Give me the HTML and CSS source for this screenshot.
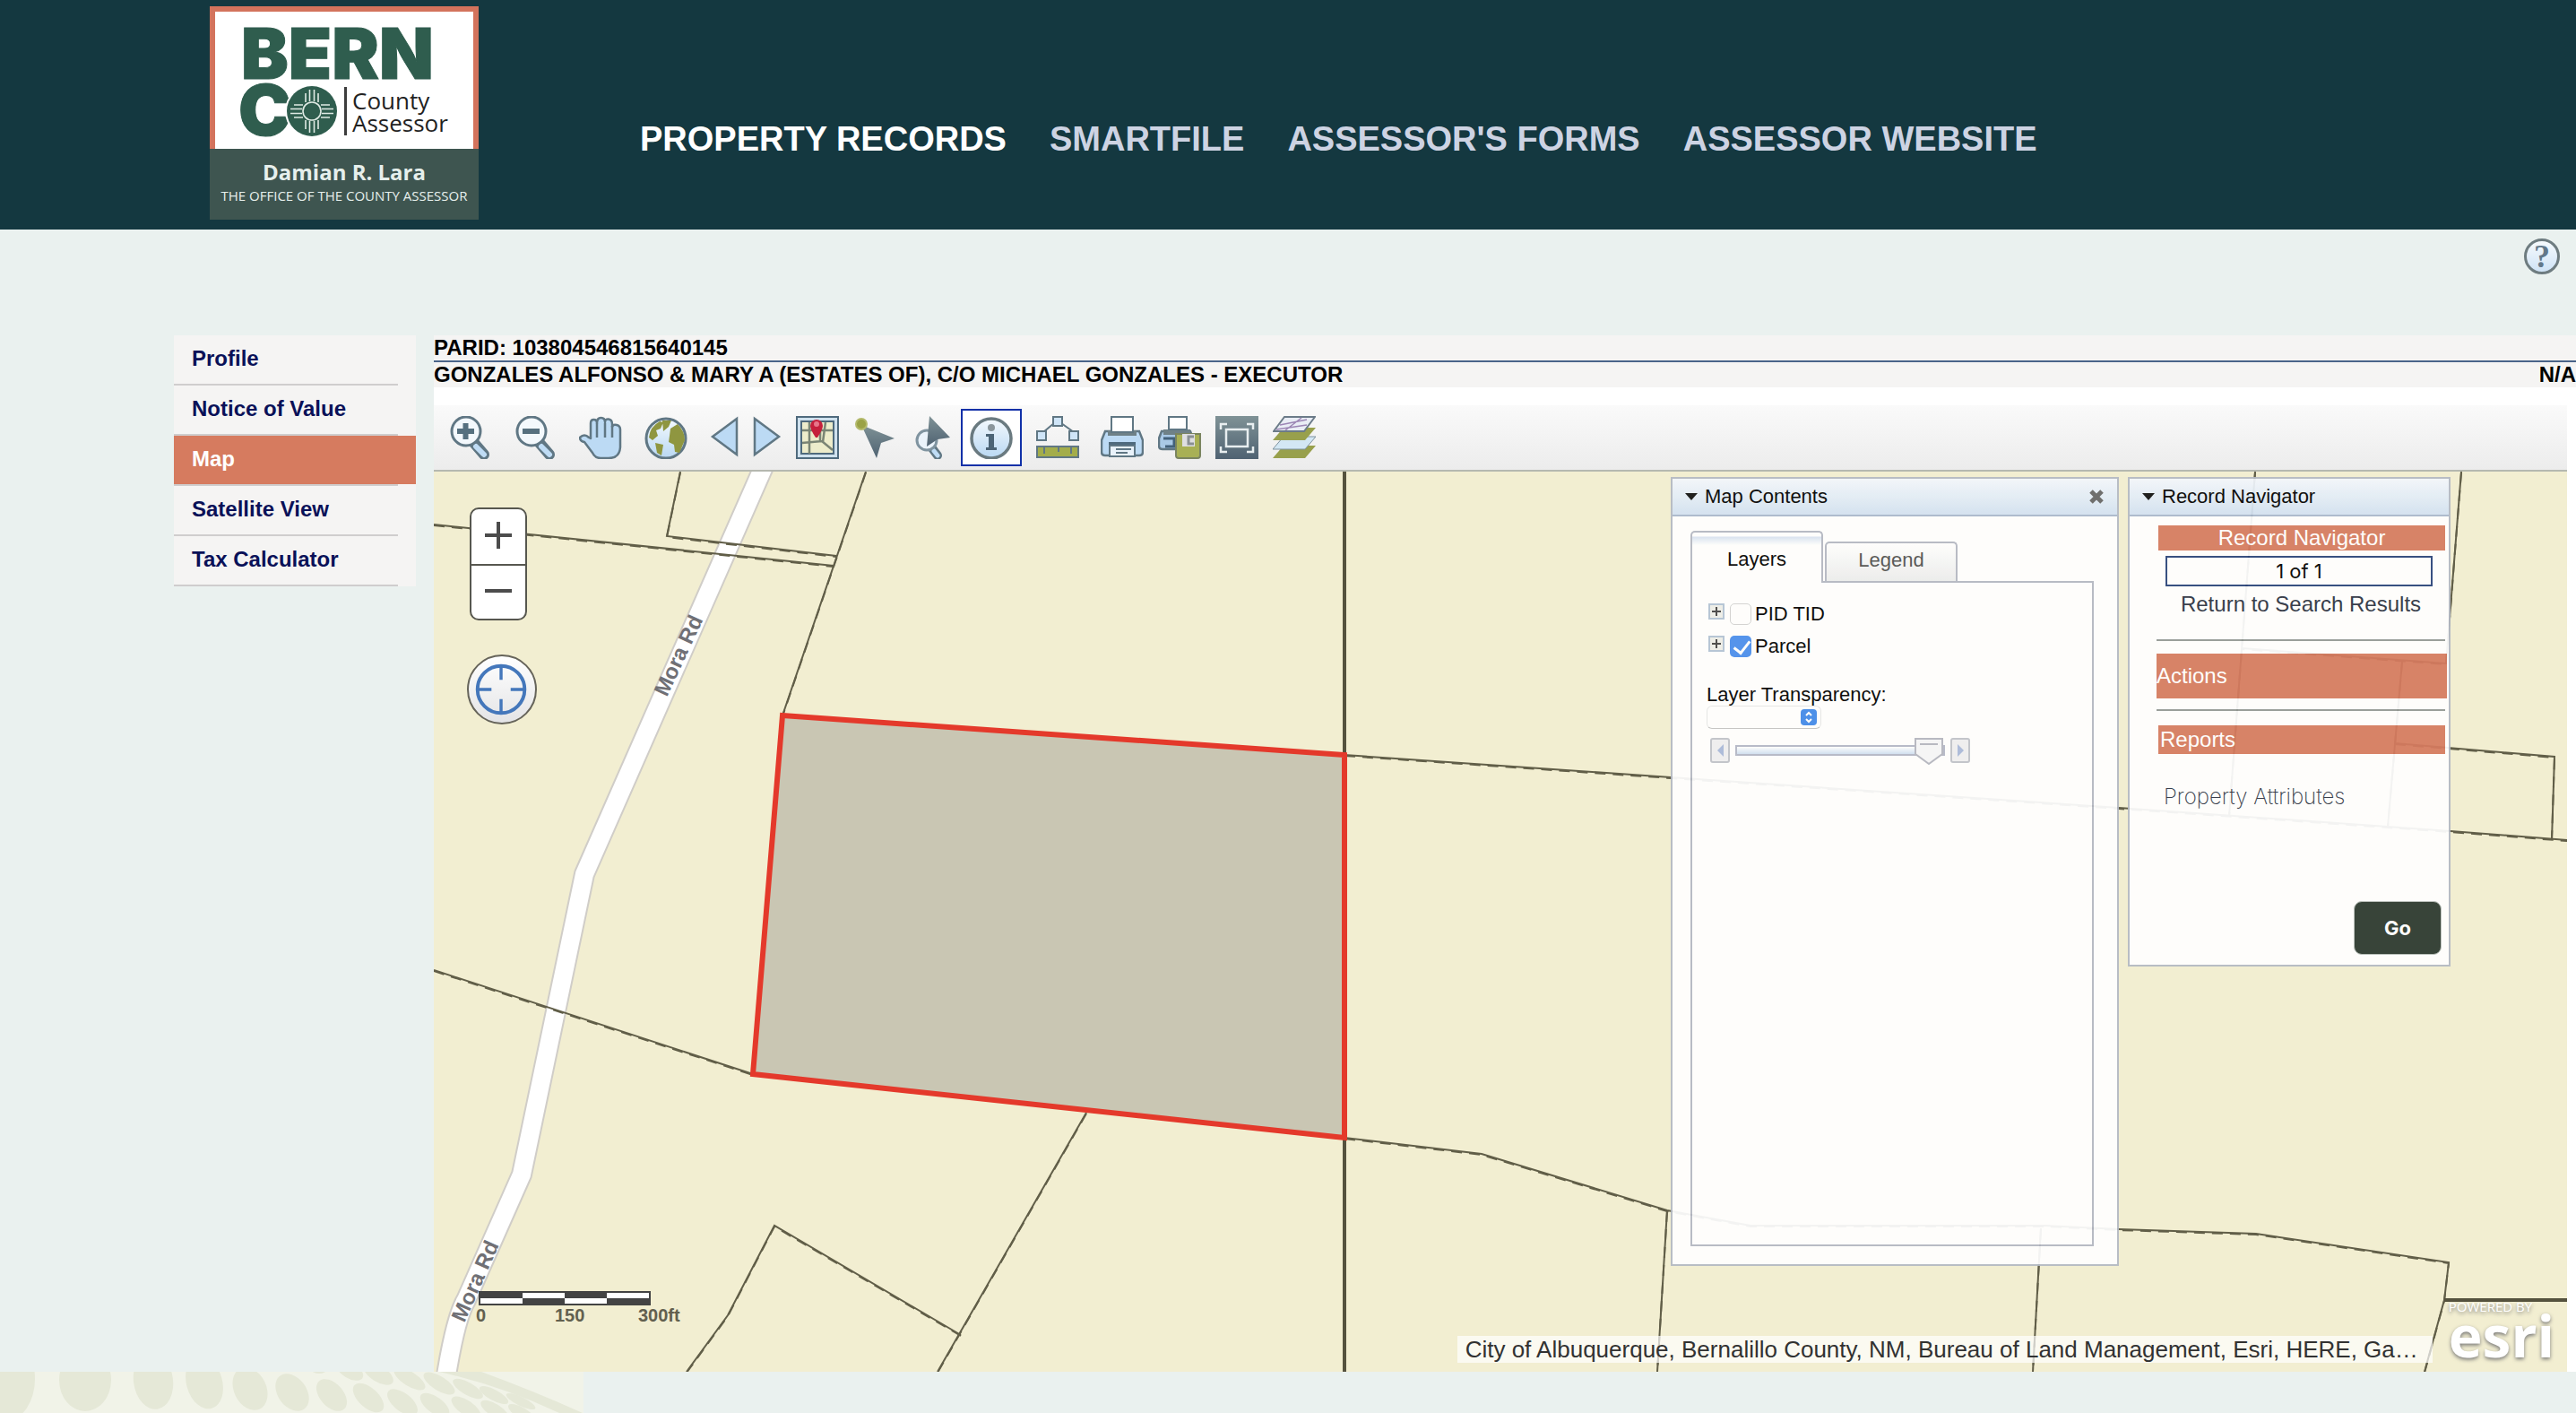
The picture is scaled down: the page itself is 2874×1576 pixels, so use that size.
FILE: index.html
```html
<!DOCTYPE html>
<html lang="en">
<head>
  <meta charset="UTF-8">
  <meta name="viewport" content="width=device-width, initial-scale=1.0">
  <title>Bernalillo County Assessor - Map</title>
  <link rel="stylesheet" href="styles.css">
</head>
<body>
  <header class="header">
    <a class="logo" href="#">
      <svg class="logo-mark" viewBox="0 0 288 153" role="img" aria-label="Bernco County Assessor">
        <text class="logo-bern" x="29" y="75">BERN</text>
        <text class="logo-bern" x="26" y="138">C</text>
        <circle cx="108" cy="111" r="30" fill="#fff"/>
        <circle cx="108" cy="111" r="28" fill="#2f5d4e"/>
        <g stroke="#dfeae4" stroke-width="1.6" fill="none">
          <circle cx="108" cy="111" r="10"/>
          <path d="M101 101v-10M105.500 100v-13M110.500 100v-13M115 101v-10M101 121v10M105.500 122v13M110.500 122v13M115 121v10M98 104h-10M97 108.500h-13M97 113.500h-13M98 118h-10M118 104h10M119 108.500h13M119 113.500h13M118 118h10"/>
        </g>
        <rect x="144" y="84" width="3" height="54" fill="#3d3d3d"/>
        <text class="logo-sub" x="153" y="109">County</text>
        <text class="logo-sub" x="153" y="134">Assessor</text>
      </svg>
      <span class="logo-plate">
        <strong>Damian R. Lara</strong>
        <small>THE OFFICE OF THE COUNTY ASSESSOR</small>
      </span>
    </a>
    <nav class="topnav">
      <a class="current" href="#">PROPERTY RECORDS</a>
      <a href="#">SMARTFILE</a>
      <a href="#">ASSESSOR'S FORMS</a>
      <a href="#">ASSESSOR WEBSITE</a>
    </nav>
  </header>

  <div class="helpbar">
    <button class="help" type="button" aria-label="Help">?</button>
  </div>

  <div class="page">
    <nav class="sidebar">
      <ul>
        <li><a href="#">Profile</a></li>
        <li><a href="#">Notice of Value</a></li>
        <li><a class="active" href="#">Map</a></li>
        <li><a href="#">Satellite View</a></li>
        <li><a href="#">Tax Calculator</a></li>
      </ul>
    </nav>

    <main class="main">
      <div class="parcel-head">
        <div class="parid">PARID: 103804546815640145</div>
        <div class="owner">
          <span>GONZALES ALFONSO &amp; MARY A (ESTATES OF), C/O MICHAEL GONZALES - EXECUTOR</span>
          <span>N/A</span>
        </div>
      </div>

      <svg class="defs" width="0" height="0" aria-hidden="true">
        <defs>
          <linearGradient id="sky" x1="0" y1="0" x2="0" y2="1"><stop offset="0" stop-color="#f4f9fd"/><stop offset="1" stop-color="#b9d8f3"/></linearGradient>
          <linearGradient id="steel" x1="0" y1="0" x2="0" y2="1"><stop offset="0" stop-color="#7f9296"/><stop offset="1" stop-color="#4f6272"/></linearGradient>
        </defs>
      </svg>

      <div class="toolbar">
        <div class="tools tools-nav">
          <button type="button" aria-label="Zoom in"><svg viewBox="0 0 48 48"><path d="M28 29l12 14" stroke="#607784" stroke-width="12" stroke-linecap="round"/><path d="M31 34l9 9" stroke="#bfdcf5" stroke-width="6" stroke-linecap="round"/><circle cx="20" cy="17" r="16" fill="#f3f8fc" stroke="#607784" stroke-width="3"/><path d="M10 17h19M19.500 8v18" stroke="#56707f" stroke-width="6"/></svg></button>
          <button type="button" aria-label="Zoom out"><svg viewBox="0 0 48 48"><path d="M28 29l12 14" stroke="#607784" stroke-width="12" stroke-linecap="round"/><path d="M31 34l9 9" stroke="#bfdcf5" stroke-width="6" stroke-linecap="round"/><circle cx="20" cy="17" r="16" fill="#f3f8fc" stroke="#607784" stroke-width="3"/><path d="M10 17h19" stroke="#56707f" stroke-width="6"/></svg></button>
          <button type="button" aria-label="Pan"><svg viewBox="0 0 48 48"><path d="M13 25V8q0-4 3.500-4T20 8q0-6 4.500-6T29 7q0-4 4-3.500T37 9v3q1-3 5-2t4 5v20q-1 12-13 12H24q-6 0-9-6L6 29q-5-1-5-5 5-5 10 0z" fill="#bcdaf4" stroke="#607784" stroke-width="2.500" stroke-linejoin="round"/><path d="M20 8v16M29 8v16M37 11v13" stroke="#607784" stroke-width="2.500"/></svg></button>
          <button type="button" aria-label="Full extent"><svg viewBox="0 0 48 48"><circle cx="24" cy="25" r="22" fill="url(#sky)" stroke="#607784" stroke-width="3"/><path d="M5 24q1-12 12-18l4 1-3 7-5 2 2 6-6 5zM20 5h10l-3 7-6 5zM29 14l8-5q8 8 8 18l-6 14-5-1-1-8-6-3 1-7zM12 30l9 2-2 12-5-3z" fill="#8f9640"/></svg></button>
        </div>
        <div class="tools">
          <button class="narrow" type="button" aria-label="Previous extent"><svg viewBox="0 0 32 48"><path d="M30 3v40L3 23z" fill="#bcdaf4" stroke="#607784" stroke-width="2.500"/></svg></button>
          <button class="narrow" type="button" aria-label="Next extent"><svg viewBox="0 0 32 48"><path d="M2 3v40l27-20z" fill="#bcdaf4" stroke="#607784" stroke-width="2.500"/></svg></button>
          <button type="button" aria-label="Overview map"><svg viewBox="0 0 48 48"><path d="M1 1h46v46H1z" fill="#cfe1ee" stroke="#4f6a7d" stroke-width="2"/><path d="M6 6h36v36H6z" fill="#edeccb" stroke="#4f6a7d" stroke-width="2"/><path d="M7 16h34M7 30l22-2 12 10M15 7v35M27 16v12M33 7l-3 22" fill="none" stroke="#7a8474" stroke-width="2.500"/><path d="M22 24q-6-9-6-13a7 7 0 0 1 14 0q0 4-6 13z" fill="#c5203c"/><circle cx="23" cy="9" r="3" fill="#e7768a"/></svg></button>
          <button type="button" aria-label="Select features"><svg viewBox="0 0 48 48"><path d="M9 10l37 15-15 5-5 17z" fill="url(#steel)"/><circle cx="9" cy="9" r="6" fill="#9aa246" stroke="#b3b96b" stroke-width="2"/></svg></button>
          <button type="button" aria-label="Zoom to selection"><svg viewBox="0 0 48 48"><path d="M24 36l6 8" stroke="#607784" stroke-width="10" stroke-linecap="round"/><path d="M26 39l4 5" stroke="#bfdcf5" stroke-width="5" stroke-linecap="round"/><circle cx="18" cy="27" r="11" fill="#eaf3fb" stroke="#8094a0" stroke-width="3"/><path d="M21 0l23 24-14 2-12 8z" fill="url(#steel)"/></svg></button>
          <button class="selected" type="button" aria-label="Identify"><svg viewBox="0 0 48 48"><circle cx="24" cy="25" r="22" fill="url(#sky)" stroke="#6a7a80" stroke-width="3.500"/><circle cx="24" cy="13" r="4" fill="#8b969c"/><path d="M18 20h9v15h3v3H18v-3h3V23h-3z" fill="#4c6476"/></svg></button>
          <button type="button" aria-label="Measure"><svg viewBox="0 0 48 48"><path d="M8 18l12-10h8l14 10" fill="none" stroke="#607784" stroke-width="2"/><path d="M19 1h10v10H19zM1 17h10v10H1zM37 17h10v10H37z" fill="#cfe5f8" stroke="#607784" stroke-width="2"/><path d="M1 34h46v12H1z" fill="#a3ad4a" stroke="#607784" stroke-width="2"/><path d="M9 34v8M25 34v6M39 34v8" stroke="#607784" stroke-width="2"/></svg></button>
          <button class="after-break" type="button" aria-label="Print"><svg viewBox="0 0 48 48"><path d="M5 17h38l4 10v13q0 4-4 4H5q-4 0-4-4V27z" fill="#bcdaf4" stroke="#607784" stroke-width="2.500"/><path d="M8 16h32v6H8z" fill="#6f8187"/><path d="M12 1h24v17H12z" fill="#fff" stroke="#607784" stroke-width="2"/><path d="M9 29h30v3H9z" fill="#4f6a7d"/><path d="M10 33h28v12H10z" fill="#e9f2fa" stroke="#607784" stroke-width="2"/><path d="M17 37h17M17 41h13" stroke="#607784" stroke-width="2"/></svg></button>
          <button type="button" aria-label="Print to file"><svg viewBox="0 0 48 48"><path d="M4 17h32l3 8v8q0 4-4 4H5q-4 0-4-4v-8z" fill="#a9c9e6" stroke="#607784" stroke-width="2.500"/><path d="M6 15h30v6H6z" fill="#6f8187"/><path d="M12 1h20v14H12z" fill="#fff" stroke="#607784" stroke-width="2"/><path d="M6 25h12v9H8" fill="none" stroke="#43617a" stroke-width="3"/><path d="M20 20h27v24q0 3-3 3H23q-3 0-3-3z" fill="#a8b055" stroke="#7a8460" stroke-width="2"/><path d="M27 20h14v14H27z" fill="#dfdfe2"/><path d="M40 23h-6v8h6" fill="none" stroke="#8a9094" stroke-width="3"/></svg></button>
          <button type="button" aria-label="Zoom to extent"><svg viewBox="0 0 48 48"><path d="M0 0h48v48H0z" fill="url(#steel)"/><path d="M12 15h24v19H12zM6 15V9h7M35 9h7v6M6 34v6h7M35 40h7v-6" fill="none" stroke="#e8eef0" stroke-width="2.500"/></svg></button>
          <button type="button" aria-label="Map layers"><svg viewBox="0 0 48 48"><path d="M12 33h36L36 47H0z" fill="#98a04c"/><path d="M12 23h36L36 37H0z" fill="#d3e7f4" stroke="#7f929e"/><path d="M12 13h36L36 27H0z" fill="#98a04c"/><path d="M13 1h34L35 17H1z" fill="#e9edf5" stroke="#6b7b88" stroke-width="2"/><path d="M8 10l30-6M14 16l18-14M4 15l34-5" stroke="#9c86b5" stroke-width="1.500"/></svg></button>
        </div>
      </div>

      <div class="map">
        <svg class="map-canvas" viewBox="484 526 2380 1004" preserveAspectRatio="xMinYMin slice" role="img" aria-label="Parcel map">
          <path class="road-edge" d="M854 516L652 975L582 1310L520 1450Q508 1470 497 1540"/>
          <path class="road" d="M854 516L652 975L582 1310L520 1450Q508 1470 497 1540"/>
          <text class="road-name" transform="translate(744 778) rotate(-65)">Mora Rd</text>
          <text class="road-name" transform="translate(518 1476) rotate(-66)">Mora Rd</text>
          <g id="lines" class="lines">
            <path d="M484 585L930 631"/>
            <path d="M759 526L744 598L933 620"/>
            <path d="M966 526L873 798"/>
            <path d="M484 1082L840 1198"/>
            <path d="M1212 1241L1046 1530"/>
            <path d="M766 1530L812 1467L864 1367L1072 1489"/>
            <path d="M1500 842L1864 867L2364 901L2734 927L2864 937"/>
            <path d="M1500 1269L1653 1287L1860 1350L1953 1367H2283L2364 1371L2517 1376L2732 1408L2727 1450L2705 1530"/>
            <path d="M1860 1350L1849 1530"/>
            <path d="M2277 1370L2268 1530"/>
            <path d="M2516 526L2487 910"/>
            <path d="M2746 526L2729 740L2501 723"/>
            <path d="M2680 738L2664 922"/>
            <path d="M2672 829L2850 844L2847 936"/>
          </g>
          <use href="#lines" class="dashes"/>
          <path class="section" d="M1500 526V1530M2727 1450H2864"/>
          <path class="subject" d="M873 798L1500 842V1269L840 1198Z"/>
        </svg>

        <div class="map-controls">
          <div class="zoom">
            <button type="button" aria-label="Zoom in"><svg viewBox="0 0 60 62"><path d="M15 29h30M30 14v30" stroke="#4c4c4c" stroke-width="4"/></svg></button>
            <button type="button" aria-label="Zoom out"><svg viewBox="0 0 60 62"><path d="M15 28h30" stroke="#4c4c4c" stroke-width="4"/></svg></button>
          </div>
          <button class="locate" type="button" aria-label="Find my location"><svg viewBox="0 0 76 76"><path d="M37 11v16M37 49v16M10 38h16M48 38h16" stroke="#4477bb" stroke-width="3.500"/><circle cx="37" cy="38" r="27" fill="none" stroke="#4477bb" stroke-width="4"/></svg></button>
        </div>

        <div class="scalebar">
          <svg viewBox="0 0 192 16"><path d="M0 0h192v16H0z" fill="#434343"/><path d="M2 8h47v6H2zM49 2h47v6H49zM96 8h47v6H96zM143 2h47v6h-47z" fill="#fff"/></svg>
          <div class="scale-labels"><span>0</span><span>150</span><span>300ft</span></div>
        </div>

        <div class="credits">
          <span class="attribution">City of Albuquerque, Bernalillo County, NM, Bureau of Land Management, Esri, HERE, Ga…</span>
          <a class="esri" href="#"><small>POWERED BY</small><b>esri</b></a>
        </div>

        <div class="panels">
          <section class="panel contents">
            <h2 class="panel-title"><i class="caret"></i>Map Contents<button class="close" type="button" aria-label="Close"><svg viewBox="0 0 18 18"><path d="M3 3l12 12M15 3L3 15" stroke="#666" stroke-width="5"/></svg></button></h2>
            <div class="contents-body">
              <div class="tabs">
                <button class="tab on" type="button">Layers</button>
                <button class="tab" type="button">Legend</button>
              </div>
              <div class="pane">
                <div class="layer">
                  <button class="expand" type="button" aria-label="Expand PID TID"></button>
                  <input type="checkbox" id="pid">
                  <label for="pid">PID TID</label>
                </div>
                <div class="layer">
                  <button class="expand" type="button" aria-label="Expand Parcel"></button>
                  <input type="checkbox" id="parcel" checked>
                  <label for="parcel">Parcel</label>
                </div>
                <label class="transparency" for="layerPick">Layer Transparency:</label>
                <div class="pick">
                  <select id="layerPick"><option></option></select>
                  <svg viewBox="0 0 18 18"><rect width="18" height="18" rx="4" fill="#4189ea"/><path d="M6 7l3-3 3 3M6 11l3 3 3-3" fill="none" stroke="#fff" stroke-width="2"/></svg>
                </div>
                <div class="slider">
                  <button type="button" aria-label="Decrease"><svg viewBox="0 0 18 24"><path d="M13 5v14l-7-7z" fill="#a9b9da"/></svg></button>
                  <input type="range" min="0" max="100" value="100" aria-label="Transparency">
                  <button type="button" aria-label="Increase"><svg viewBox="0 0 18 24"><path d="M6 5v14l7-7z" fill="#a9b9da"/></svg></button>
                </div>
              </div>
            </div>
          </section>

          <section class="panel navigator">
            <h2 class="panel-title"><i class="caret"></i>Record Navigator</h2>
            <div class="navigator-body">
              <h3 class="bar centered">Record Navigator</h3>
              <input class="position" type="text" value="1 of 1" aria-label="Record position">
              <a class="return" href="#">Return to Search Results</a>
              <hr>
              <h3 class="bar actions">Actions</h3>
              <hr>
              <h3 class="bar reports">Reports</h3>
              <a class="report" href="#">Property Attributes</a>
              <button class="go" type="button">Go</button>
            </div>
          </section>
        </div>
      </div>
    </main>
  </div>

  <footer class="footer">
    <svg viewBox="0 0 651 46" aria-hidden="true">
      <path d="M0 0h651v46H0z" fill="#f1f3e8"/>
      <g fill="#e5e8d7">
        <ellipse cx="8" cy="8" rx="31" ry="46"/>
        <ellipse cx="95" cy="9" rx="29" ry="35"/>
        <ellipse cx="171" cy="10" rx="22" ry="32" transform="rotate(-8 171 10)"/>
        <ellipse cx="228" cy="12" rx="20" ry="30" transform="rotate(-16 228 12)"/>
        <ellipse cx="279" cy="19" rx="18" ry="25" transform="rotate(-26 279 19)"/>
        <ellipse cx="326" cy="23" rx="16" ry="23" transform="rotate(-36 326 23)"/>
        <ellipse cx="370" cy="26" rx="13" ry="21" transform="rotate(-42 370 26)"/>
        <ellipse cx="411" cy="29" rx="11" ry="21" transform="rotate(-48 411 29)"/>
        <ellipse cx="449" cy="34" rx="10" ry="20" transform="rotate(-52 449 34)"/>
        <ellipse cx="485" cy="37" rx="9" ry="19" transform="rotate(-54 485 37)"/>
        <ellipse cx="520" cy="40" rx="8" ry="19" transform="rotate(-56 520 40)"/>
        <ellipse cx="552" cy="43" rx="7" ry="18" transform="rotate(-58 552 43)"/>
        <ellipse cx="582" cy="46" rx="6" ry="17" transform="rotate(-60 582 46)"/>
        <ellipse cx="356" cy="-2" rx="8" ry="4"/>
        <ellipse cx="390" cy="-2" rx="9" ry="17" transform="rotate(-58 390 -2)"/>
        <ellipse cx="422" cy="2" rx="9" ry="19" transform="rotate(-58 422 2)"/>
        <ellipse cx="457" cy="8" rx="8" ry="20" transform="rotate(-58 457 8)"/>
        <ellipse cx="490" cy="13" rx="8" ry="20" transform="rotate(-58 490 13)"/>
        <ellipse cx="522" cy="19" rx="7" ry="19" transform="rotate(-60 522 19)"/>
        <ellipse cx="551" cy="26" rx="6" ry="18" transform="rotate(-62 551 26)"/>
        <ellipse cx="581" cy="33" rx="5" ry="18" transform="rotate(-64 581 33)"/>
        <path d="M490 0h47q60 22 113 46h-26Q560 16 490 0z"/>
      </g>
    </svg>
  </footer>
</body>
</html>
```
FILE: styles.css
```css
* {
  box-sizing: border-box;
}
body {
  margin: 0;
  min-height: 100vh;
  display: flex;
  flex-direction: column;
  background-color: #eaf1ef;
  font-family: "Liberation Sans", Arial, sans-serif;
  font-size: 24px;
  color: #000;
}
a {
  color: inherit;
  text-decoration: none;
}
button {
  padding: 0;
  border: none;
  background: none;
  font: inherit;
  cursor: pointer;
}
svg {
  display: block;
}
h2, h3 {
  margin: 0;
  font-weight: normal;
}
.defs {
  position: absolute;
}

/* header */
.header {
  display: flex;
  align-items: flex-start;
  height: 256px;
  padding: 7px 0 0 234px;
  background-color: #143840;
}
.logo {
  width: 300px;
  height: 238px;
  display: flex;
  flex-direction: column;
  background-color: #3e5550;
}
.logo-mark {
  height: 159px;
  border: 6px solid #d3735c;
  border-bottom: none;
  background-color: #fff;
}
.logo-bern {
  font-family: Inter, sans-serif;
  font-weight: 900;
  font-size: 79px;
  fill: #2f5d4e;
  stroke: #2f5d4e;
  stroke-width: 1px;
}
.logo-sub {
  font-family: "Open Sans", sans-serif;
  font-size: 26px;
  font-weight: 500;
  fill: #222;
}
.logo-plate {
  padding-top: 10px;
  display: flex;
  flex-direction: column;
  align-items: center;
  font-family: "Open Sans", sans-serif;
  color: #e6efec;
}
.logo-plate strong {
  font-size: 24px;
  line-height: 32px;
}
.logo-plate small {
  font-size: 15px;
  line-height: 20px;
  white-space: nowrap;
}
.topnav {
  display: flex;
  gap: 48px;
  margin: 124px 0 0 180px;
  font-size: 38px;
  line-height: 48px;
  font-weight: bold;
  color: #cdd3e3;
}
.topnav .current {
  color: #fff;
}

.helpbar {
  display: flex;
  justify-content: flex-end;
  height: 118px;
  padding: 10px 18px 0 0;
}
.help {
  width: 40px;
  height: 40px;
  border: 3px solid #6e7c80;
  border-radius: 50%;
  background: linear-gradient(#f6fafd, #cfe3f6);
  font-family: "Liberation Serif", serif;
  font-weight: bold;
  font-size: 36px;
  line-height: 34px;
  color: #62788a;
}

/* page body */
.page {
  flex: 1;
  display: flex;
  gap: 20px;
  padding-left: 194px;
}
.sidebar {
  flex: 0 0 270px;
}
.sidebar ul {
  margin: 0;
  padding: 0;
  list-style: none;
  background-color: #f5f4f3;
}
.sidebar li::after {
  content: "";
  display: block;
  width: 250px;
  height: 2px;
  background-color: #cfcdcd;
}
.sidebar a {
  display: block;
  padding: 0 20px 2px;
  line-height: 52px;
  font-weight: bold;
  color: #0a1158;
}
.sidebar .active {
  background-color: #d67b5f;
  color: #fff;
}
.main {
  flex: 1;
  min-width: 0;
  display: flex;
  flex-direction: column;
  background-color: #fff;
}
.parcel-head {
  margin-bottom: 20px;
  background-color: #f5f4f3;
  font-weight: bold;
  line-height: 28px;
}
.parid {
  border-bottom: 2px solid #4a6489;
}
.owner {
  display: flex;
  justify-content: space-between;
}

/* toolbar */
.toolbar {
  display: flex;
  align-items: center;
  gap: 25px;
  height: 74px;
  margin-right: 10px;
  padding-left: 16px;
  background: linear-gradient(#fafafa, #ececec);
  border-bottom: 2px solid #b5b8b0;
}
.tools {
  display: flex;
  align-items: center;
  gap: 16px;
}
.tools-nav {
  gap: 25px;
}
.tools button {
  width: 48px;
  height: 48px;
}
.tools .narrow {
  width: 32px;
}
.tools .selected {
  width: 68px;
  height: 64px;
  margin-left: -8px;
  padding: 6px 8px;
  border: 2px solid #1030a8;
  background-color: #fff;
}
.tools .after-break {
  margin-left: 8px;
}

/* map */
.map {
  flex: 1;
  position: relative;
  min-height: 900px;
  margin-right: 10px;
  overflow: hidden;
  background-color: #f2eed1;
}
.map-canvas {
  position: absolute;
  width: 100%;
  height: 100%;
  fill: none;
}
.road-edge {
  stroke: #d0cdc8;
  stroke-width: 24;
}
.road {
  stroke: #fff;
  stroke-width: 20;
}
.road-name {
  fill: #707075;
  font-weight: bold;
  font-size: 24px;
}
.lines {
  stroke: #615e48;
  stroke-width: 2;
}
.dashes {
  stroke: #55523e;
  stroke-width: 3;
  stroke-dasharray: 12 8;
  transform: translateY(1px);
}
.section {
  stroke: #55523e;
  stroke-width: 4;
}
.subject {
  fill: #c9c6b3;
  stroke: #e4392b;
  stroke-width: 6;
}
.map-controls {
  position: absolute;
  top: 40px;
  left: 37px;
  width: 78px;
}
.zoom {
  width: 64px;
  margin-left: 3px;
  overflow: hidden;
  border: 2px solid #57574f;
  border-radius: 10px;
  background-color: #fff;
}
.zoom button {
  display: block;
  width: 60px;
  height: 61px;
}
.zoom button + button {
  border-top: 2px solid #57574f;
}
.locate {
  width: 78px;
  height: 78px;
  margin-top: 38px;
  border: 2px solid #66645a;
  border-radius: 50%;
  background: linear-gradient(#fff, #e4e4e6);
}
.scalebar {
  position: absolute;
  left: 50px;
  bottom: 52px;
  width: 192px;
}
.scale-labels {
  display: grid;
  grid-template-columns: 88px 93px auto;
  margin-left: -3px;
  font-size: 20px;
  line-height: 22px;
  font-weight: bold;
  color: #62604f;
}
.credits {
  position: absolute;
  right: 14px;
  bottom: 10px;
  display: flex;
  align-items: flex-end;
  gap: 18px;
}
.attribution {
  padding: 0 16px 0 9px;
  line-height: 30px;
  font-size: 26px;
  color: #323232;
  background-color: rgba(255, 255, 255, 0.7);
}
.esri {
  display: flex;
  flex-direction: column;
  padding-bottom: 5px;
  font-family: "Open Sans", sans-serif;
  color: #fff;
  text-shadow: 0 2px 4px #777;
}
.esri small {
  font-size: 15px;
  line-height: 15px;
}
.esri b {
  font-size: 64px;
  line-height: 50px;
}

/* floating panels */
.panels {
  position: absolute;
  top: 6px;
  right: 130px;
  bottom: 118px;
  display: flex;
  align-items: flex-start;
  gap: 10px;
}
.panel {
  border: 2px solid #b4bac4;
  background-color: #fff;
  opacity: 0.93;
  font-size: 22px;
}
.panel-title {
  display: flex;
  align-items: center;
  height: 42px;
  padding: 0 14px;
  background: linear-gradient(#f3f7fc, #d3e2f2);
  border-bottom: 2px solid #a9b8cd;
  font-size: 22px;
  line-height: 30px;
}
.caret {
  margin-right: 8px;
  border: 7px solid transparent;
  border-top: 8px solid #111;
  border-bottom: none;
}
.close {
  width: 18px;
  margin-left: auto;
}
.contents {
  width: 500px;
  height: 100%;
  display: flex;
  flex-direction: column;
}
.contents-body {
  flex: 1;
  display: flex;
  flex-direction: column;
  padding: 16px 26px 20px 20px;
}
.tabs {
  display: flex;
  align-items: flex-end;
  gap: 2px;
}
.tab {
  width: 148px;
  height: 44px;
  border: 2px solid #b4b8c4;
  border-bottom: none;
  border-radius: 5px 5px 0 0;
  background: linear-gradient(#fff, #ecedee);
  line-height: 32px;
  padding-bottom: 4px;
  color: #505050;
}
.tab.on {
  position: relative;
  height: 58px;
  margin-bottom: -2px;
  padding-top: 8px;
  background: linear-gradient(#fff 4px, #d9e3f2 5px, #fff 14px);
  color: #000;
}
.pane {
  flex: 1;
  padding: 23px 16px;
  border: 2px solid #b4b8c4;
}
.layer {
  display: flex;
  align-items: center;
  height: 24px;
  margin-bottom: 12px;
  padding-left: 2px;
}
.expand {
  width: 18px;
  height: 18px;
  margin: 0 6px 6px 0;
  border: 2px solid #b3c4d6;
  background:
    linear-gradient(#444, #444) center / 10px 2px no-repeat,
    linear-gradient(#444, #444) center / 2px 10px no-repeat,
    #eeefe9;
}
.layer input {
  appearance: none;
  width: 24px;
  height: 24px;
  margin: 0 4px 0 0;
  border: 1px solid #d2d2d2;
  border-radius: 5px;
  background-color: #fff;
}
.layer input:checked {
  border: none;
  background-color: #4a8eee;
}
.layer input:checked::after {
  content: "";
  display: block;
  width: 8px;
  height: 15px;
  margin: 2px 8px;
  border: solid #fff;
  border-width: 0 3px 3px 0;
  transform: rotate(38deg);
}
.transparency {
  display: block;
  margin-top: 30px;
  line-height: 24px;
}
.pick {
  position: relative;
  width: 128px;
}
.pick select {
  appearance: none;
  display: block;
  width: 128px;
  height: 26px;
  border: 1px solid #e6e6e6;
  border-bottom-color: #c4c4c4;
  border-radius: 6px;
  background-color: #fff;
}
.pick svg {
  position: absolute;
  top: 4px;
  right: 5px;
  width: 18px;
  pointer-events: none;
}
.slider {
  display: flex;
  align-items: center;
  gap: 6px;
  margin: 8px 0 0 4px;
}
.slider button {
  width: 22px;
  height: 28px;
  border: 2px solid #c0c2ca;
  border-radius: 3px;
  background-color: #efeff1;
}
.slider input {
  appearance: none;
  width: 234px;
  height: 32px;
  margin: 0;
  background: none;
}
.slider input::-webkit-slider-runnable-track {
  height: 12px;
  border: 2px solid #b4b8c8;
  background: linear-gradient(#fff, #cfdff2);
}
.slider input::-webkit-slider-thumb {
  appearance: none;
  width: 32px;
  height: 30px;
  margin-top: -10px;
  background: url("data:image/svg+xml,%3Csvg xmlns='http://www.w3.org/2000/svg' viewBox='0 0 32 30'%3E%3Cpath d='M1 1h30v17L16 29 1 18z' fill='%23f6f6f8' stroke='%23b4b6c0' stroke-width='2'/%3E%3Cpath d='M6 7h20' stroke='%23b4b6c0' stroke-width='2'/%3E%3C/svg%3E");
}

/* record navigator */
.navigator {
  width: 360px;
}
.navigator-body {
  display: flex;
  flex-direction: column;
  padding: 10px 4px 11px 30px;
}
.bar {
  margin-left: 2px;
  background-color: #d67b5f;
  color: #fff;
  font-size: 24px;
  line-height: 28px;
}
.centered {
  text-align: center;
}
.position {
  height: 34px;
  margin: 6px 14px 6px 10px;
  padding: 0;
  border: 2px solid #2b457c;
  background: none;
  font-family: Inter, sans-serif;
  font-size: 22px;
  text-align: center;
}
.return {
  margin-bottom: 25px;
  font-size: 24px;
  line-height: 28px;
  text-align: center;
  color: #2c3242;
}
.navigator hr {
  width: 100%;
  margin: 0;
  border: none;
  border-top: 2px solid #949a96;
}
.actions {
  margin: 14px -2px 12px 0;
  line-height: 50px;
}
.reports {
  margin-top: 16px;
  padding-left: 2px;
  line-height: 32px;
}
.report {
  margin: 34px 0 102px 8px;
  font-family: Inter, sans-serif;
  font-weight: 200;
  font-size: 24px;
  line-height: 28px;
  color: #2c3242;
}
.go {
  align-self: flex-end;
  width: 98px;
  height: 60px;
  margin-right: 4px;
  border: 1px solid #b9c0bc;
  border-radius: 9px;
  background-color: #2b382e;
  color: #fff;
  font-family: Inter, sans-serif;
  font-weight: 700;
}

.footer {
  height: 46px;
  overflow: hidden;
}
.footer svg {
  width: 651px;
}
```
